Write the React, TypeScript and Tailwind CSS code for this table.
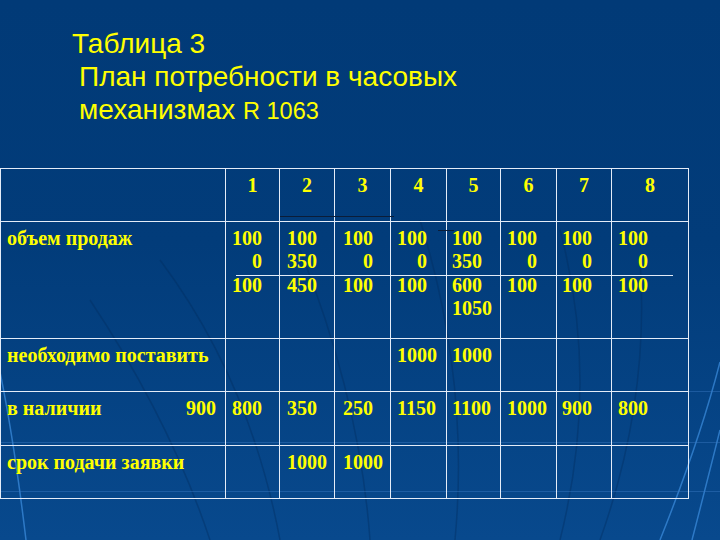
import React from "react";

const BORDER = "border-[#e4ecf8]";
const PL = ["pl-[6px]", "pl-[6px]", "pl-[7px]", "pl-[8px]", "pl-[6px]", "pl-[5px]", "pl-[6px]", "pl-[5px]", "pl-[6px]"];

function Cell({ col, children, center, className = "" }: { col: number; children?: React.ReactNode; center?: boolean; className?: string }) {
  return (
    <div className={`border-r border-b ${BORDER} pt-[4.5px] ${center ? "text-center" : PL[col]} ${className}`}>
      {children}
    </div>
  );
}

function Stack({ lines, rightZero = true }: { lines: string[]; rightZero?: boolean }) {
  return (
    <div className="inline-block">
      {lines.map((l, i) => (
        <div key={i} className={rightZero && l === "0" ? "text-right" : "text-left"}>
          {l}
        </div>
      ))}
    </div>
  );
}

export default function App() {
  const header = ["1", "2", "3", "4", "5", "6", "7", "8"];
  const sales: string[][] = [
    ["100", "0", "100"],
    ["100", "350", "450"],
    ["100", "0", "100"],
    ["100", "0", "100"],
    ["100", "350", "600", "1050"],
    ["100", "0", "100"],
    ["100", "0", "100"],
    ["100", "0", "100"],
  ];
  const need = ["", "", "", "1000", "1000", "", "", ""];
  const stock = ["800", "350", "250", "1150", "1100", "1000", "900", "800"];
  const deadline = ["", "1000", "1000", "", "", "", "", ""];

  return (
    <div className="relative w-[720px] h-[540px] overflow-hidden bg-[linear-gradient(180deg,#013a77_0%,#023c7a_45%,#08498d_100%)]">
      <svg className="absolute inset-0" width="720" height="540" viewBox="0 0 720 540" fill="none">
        <g stroke="#022c5e" strokeOpacity="0.4" strokeWidth="1.5">
          <path d="M 90 300 Q 170 420 210 540" />
          <path d="M 160 260 Q 250 380 280 540" />
          <path d="M 300 250 Q 360 400 370 540" />
          <path d="M 420 220 Q 470 380 455 540" />
          <path d="M 560 230 Q 600 380 560 540" />
          <path d="M 640 260 Q 650 400 600 540" />
        </g>
        <g stroke="#3d8ee0" strokeOpacity="0.7" strokeWidth="1.5">
          <path d="M 720 362 Q 700 440 660 540" />
          <path d="M 720 430 Q 705 490 692 540" />
          <path d="M 0 372 Q 14 440 26 540" />
        </g>
        <g stroke="#3a78c0" strokeOpacity="0.45" strokeWidth="1">
          <path d="M 0 442.5 H 720" />
          <path d="M 0 491.5 H 720" />
          <path d="M 688 391.5 H 720" />
        </g>
      </svg>

      <div className="relative pt-[27px] font-['Liberation_Sans',Arial,sans-serif] text-[28px] leading-[33px] text-[#ffff00]">
        <div className="h-[33px] pl-[72px]">Таблица 3</div>
        <div className="h-[33px] pl-[79px]">План потребности в часовых</div>
        <div className="h-[33px] pl-[79px]">
          механизмах <span className="text-[23.5px] leading-none">R 1063</span>
        </div>
      </div>

      <div className={`relative mt-[42px] w-[689px] border-l border-t ${BORDER} font-['Liberation_Serif',serif] font-bold text-[20px] leading-[23.5px] text-[#ffff00]`}>
        <div className="grid grid-cols-[225px_54px_55px_56px_56px_54px_56px_55px_77px] grid-rows-[53px_117px_53px_54px_53px]">
          <Cell col={0} />
          {header.map((h, i) => (
            <Cell key={`h${i}`} col={i + 1} center>
              {h}
            </Cell>
          ))}

          <Cell col={0}>объем продаж</Cell>
          {sales.map((s, i) => (
            <Cell key={`s${i}`} col={i + 1}>
              <Stack lines={s} />
            </Cell>
          ))}

          <Cell col={0}>необходимо поставить</Cell>
          {need.map((v, i) => (
            <Cell key={`n${i}`} col={i + 1}>
              {v}
            </Cell>
          ))}

          <Cell col={0} className="flex justify-between pr-[9px]">
            <span>в наличии</span>
            <span>900</span>
          </Cell>
          {stock.map((v, i) => (
            <Cell key={`st${i}`} col={i + 1}>
              {v}
            </Cell>
          ))}

          <Cell col={0}>срок подачи заявки</Cell>
          {deadline.map((v, i) => (
            <Cell key={`d${i}`} col={i + 1}>
              {v}
            </Cell>
          ))}
        </div>

        <div className="absolute left-[235px] top-[106px] w-[437px] h-px bg-[#e4ecf8]" />
        <div className="absolute left-[279px] top-[47px] w-[114px] h-px bg-[#0b1d38]" />
        <div className="absolute left-[437px] top-[61px] w-[16px] h-px bg-[#0b1d38]" />
      </div>
    </div>
  );
}
